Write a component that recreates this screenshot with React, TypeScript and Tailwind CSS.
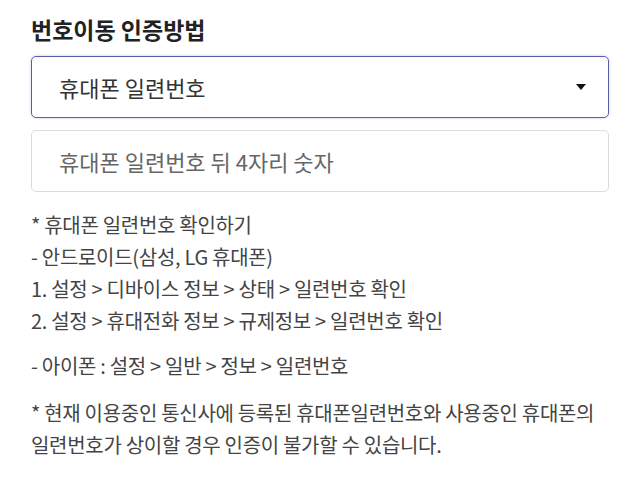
export default function App() {
  const font = { fontFamily: '"Noto Sans CJK KR", "Noto Sans", sans-serif' }

  return (
    <div className="min-h-[480px] w-[640px] bg-white px-[31px] pt-[10px]" style={font}>
      <h2 className="text-[23px] font-bold leading-[38px] text-[#222]">번호이동 인증방법</h2>

      <div className="mt-[8px] flex h-[62px] items-center justify-between rounded-[5px] border border-[#5b5ea6] pl-[27px] pr-[22px] shadow-[0_0_3px_rgba(91,94,200,0.35)]">
        <span className="text-[22px] text-[#333]">휴대폰 일련번호</span>
        <svg width="10" height="6" viewBox="0 0 10 6">
          <path d="M0 0 L10 0 L5 6 Z" fill="#111" />
        </svg>
      </div>

      <input
        className="mt-[12px] h-[62px] w-full rounded-[5px] border border-[#dcdcdc] pl-[27px] text-[22px] text-[#333] outline-none placeholder:text-[#666]"
        placeholder="휴대폰 일련번호 뒤 4자리 숫자"
        style={font}
      />

      <div className="mt-[17px] text-[20px] leading-[32px] tracking-[-0.3px] text-[#444]">
        <p>* 휴대폰 일련번호 확인하기</p>
        <p>- 안드로이드(삼성, LG 휴대폰)</p>
        <p>1. 설정 &gt; 디바이스 정보 &gt; 상태 &gt; 일련번호 확인</p>
        <p>2. 설정 &gt; 휴대전화 정보 &gt; 규제정보 &gt; 일련번호 확인</p>
        <p className="mt-[13px]">- 아이폰 : 설정 &gt; 일반 &gt; 정보 &gt; 일련번호</p>
        <p className="mt-[15px]">
          * 현재 이용중인 통신사에 등록된 휴대폰일련번호와 사용중인 휴대폰의
          <br />
          일련번호가 상이할 경우 인증이 불가할 수 있습니다.
        </p>
      </div>
    </div>
  )
}
